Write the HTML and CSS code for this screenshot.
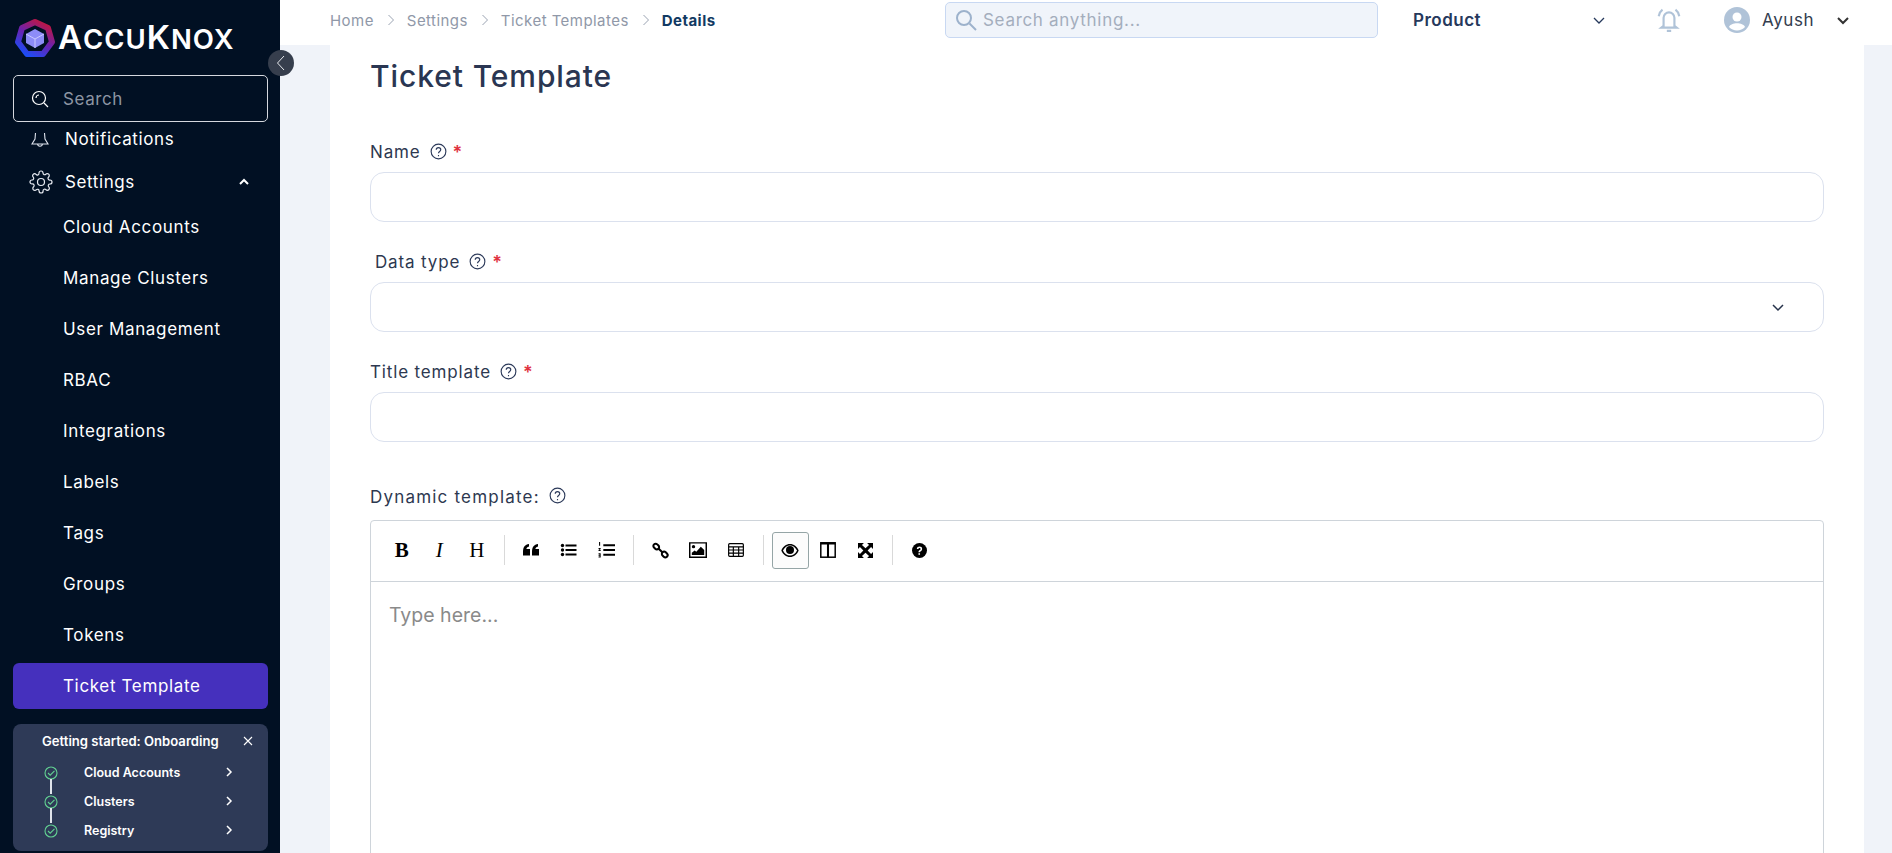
FILE: index.html
```html
<!DOCTYPE html>
<html lang="en">
<head>
<meta charset="utf-8">
<title>Ticket Template</title>
<link rel="stylesheet" href="styles.css">
</head>
<body>
<div class="app">
  <aside class="sidebar">
    <div class="logo">
      <svg class="logo-mark" viewBox="0 0 40 40" width="40" height="40">
        <defs>
          <linearGradient id="lg" x1="0.8" y1="0" x2="0.2" y2="1">
            <stop offset="0" stop-color="#c2163f"/><stop offset=".5" stop-color="#6a22b0"/><stop offset="1" stop-color="#1d4cf5"/>
          </linearGradient>
        </defs>
        <path d="M20 4l13 6 4 14-9 12H12L3 24l4-14z" fill="none" stroke="url(#lg)" stroke-width="6" stroke-linejoin="round"/>
        <path d="M20 11l9 5v9l-9 5-9-5v-9z" fill="#8d8cf7"/>
        <path d="M11 16l9 5 9-5M20 21v9" fill="none" stroke="#c9c8ff" stroke-width="1"/>
      </svg>
      <span class="logo-text"><span class="cap">A</span>CCU<span class="cap">K</span>NOX</span>
    </div>
    <div class="side-search">
      <svg width="20" height="20" viewBox="0 0 20 20" fill="none" stroke="#fff" stroke-width="1.2"><circle cx="9" cy="9" r="6.5"/><path d="M6 9a3 3 0 0 1 3-3M14 14l4 4"/></svg>
      <span>Search</span>
    </div>
    <nav class="nav">
      <div class="nav-top clipped">
        <svg width="20" height="20" viewBox="0 0 20 20" fill="none" stroke="#dfe4ee" stroke-width="1.1"><path d="M5.500 4L5 10l-3 5h16l-3-5-.5-6M7.500 15c.5 3 4.500 3 5 0"/></svg>
        <span>Notifications</span>
      </div>
      <div class="nav-top">
        <svg width="24" height="24" viewBox="0 0 24 24" fill="none" stroke="#e8ebf2" stroke-width="1.2"><circle cx="12" cy="12" r="3.500"/><path d="M19.400 15a1.650 1.650 0 0 0 .33 1.820l.06.06a2 2 0 1 1-2.830 2.830l-.06-.06a1.650 1.650 0 0 0-2.800 1.170V21a2 2 0 1 1-4 0v-.09a1.650 1.650 0 0 0-2.800-1.170l-.06.06a2 2 0 1 1-2.830-2.830l.06-.06A1.650 1.650 0 0 0 3 14H3a2 2 0 1 1 0-4h.09a1.650 1.650 0 0 0 1.170-2.800l-.06-.06a2 2 0 1 1 2.830-2.830l.06.06A1.650 1.650 0 0 0 10 3V3a2 2 0 1 1 4 0v.09a1.650 1.650 0 0 0 2.800 1.170l.06-.06a2 2 0 1 1 2.830 2.830l-.06.06A1.650 1.650 0 0 0 21 10h0a2 2 0 1 1 0 4h-.09a1.650 1.650 0 0 0-1.510 1z"/></svg>
        <span>Settings</span>
        <svg class="nav-caret" width="12" height="8" viewBox="0 0 12 8" fill="none" stroke="#fff" stroke-width="2"><path d="M2 6l4-4 4 4"/></svg>
      </div>
      <a class="nav-item">Cloud Accounts</a>
      <a class="nav-item">Manage Clusters</a>
      <a class="nav-item">User Management</a>
      <a class="nav-item">RBAC</a>
      <a class="nav-item">Integrations</a>
      <a class="nav-item">Labels</a>
      <a class="nav-item">Tags</a>
      <a class="nav-item">Groups</a>
      <a class="nav-item">Tokens</a>
      <a class="nav-item active">Ticket Template</a>
    </nav>
    <section class="onboard">
      <header class="onboard-head">
        <span>Getting started: Onboarding</span>
        <svg width="10" height="10" viewBox="0 0 10 10" stroke="#fff" stroke-width="1.1"><path d="M1 1l8 8M9 1l-8 8"/></svg>
      </header>
      <div class="step">
        <svg class="check" width="14" height="14" viewBox="0 0 14 14" fill="none" stroke="#62d192" stroke-width="1.1"><circle cx="7" cy="7" r="6"/><path d="M4 7l2.200 2.200L10.500 4.800"/></svg>
        <span>Cloud Accounts</span>
        <svg class="step-arrow" width="8" height="12" viewBox="0 0 8 12" fill="none" stroke="#fff" stroke-width="1.500"><path d="M2 2l4 4-4 4"/></svg>
      </div>
      <div class="step link">
        <svg class="check" width="14" height="14" viewBox="0 0 14 14" fill="none" stroke="#62d192" stroke-width="1.1"><circle cx="7" cy="7" r="6"/><path d="M4 7l2.200 2.200L10.500 4.800"/></svg>
        <span>Clusters</span>
        <svg class="step-arrow" width="8" height="12" viewBox="0 0 8 12" fill="none" stroke="#fff" stroke-width="1.500"><path d="M2 2l4 4-4 4"/></svg>
      </div>
      <div class="step link">
        <svg class="check" width="14" height="14" viewBox="0 0 14 14" fill="none" stroke="#62d192" stroke-width="1.1"><circle cx="7" cy="7" r="6"/><path d="M4 7l2.200 2.200L10.500 4.800"/></svg>
        <span>Registry</span>
        <svg class="step-arrow" width="8" height="12" viewBox="0 0 8 12" fill="none" stroke="#fff" stroke-width="1.500"><path d="M2 2l4 4-4 4"/></svg>
      </div>
    </section>
    <button class="collapse" type="button" aria-label="Collapse">
      <svg width="10" height="16" viewBox="0 0 10 16" fill="none" stroke="#e6e8ec" stroke-width="1"><path d="M8 1L1.500 8 8 15"/></svg>
    </button>
  </aside>
  <div class="right">
    <header class="topbar">
      <nav class="crumbs">
        <span>Home</span><svg class="crumb-sep" width="8" height="12" viewBox="0 0 8 12" fill="none" stroke="#9aa3b2" stroke-width="1"><path d="M1.500 1l5 5-5 5"/></svg>
        <span>Settings</span><svg class="crumb-sep" width="8" height="12" viewBox="0 0 8 12" fill="none" stroke="#9aa3b2" stroke-width="1"><path d="M1.500 1l5 5-5 5"/></svg>
        <span>Ticket Templates</span><svg class="crumb-sep" width="8" height="12" viewBox="0 0 8 12" fill="none" stroke="#9aa3b2" stroke-width="1"><path d="M1.500 1l5 5-5 5"/></svg>
        <b>Details</b>
      </nav>
      <div class="top-search">
        <svg width="24" height="24" viewBox="0 0 24 24" fill="none" stroke="#9db2cc" stroke-width="2"><circle cx="10" cy="10" r="7"/><path d="M15.500 15.500L22 22"/></svg>
        <span>Search anything...</span>
      </div>
      <div class="product">
        <b>Product</b>
        <svg width="14" height="9" viewBox="0 0 14 9" fill="none" stroke="#26395c" stroke-width="1.300"><path d="M2 2l5 5 5-5"/></svg>
      </div>
      <svg class="bell" width="26" height="26" viewBox="0 0 24 24" fill="none" stroke="#b0c3d8" stroke-width="2"><path d="M7 17.500V10a5 5 0 0 1 10 0v7.500l2 1.500H5zM10 22h4M2.500 8.500C3 6 4 4 6 2.500M21.500 8.500C21 6 20 4 18 2.500"/></svg>
      <div class="user">
        <svg width="26" height="26" viewBox="0 0 26 26"><circle cx="13" cy="13" r="13" fill="#b0c3d8"/><circle cx="13" cy="10" r="4.500" fill="#fff"/><path d="M5 20c2-5 14-5 16 0-4 4.500-12 4.500-16 0z" fill="#fff"/></svg>
        <span>Ayush</span>
        <svg class="user-caret" width="14" height="9" viewBox="0 0 14 9" fill="none" stroke="#333" stroke-width="2"><path d="M2 2l5 5 5-5"/></svg>
      </div>
    </header>
    <main class="main">
      <div class="card">
        <h1>Ticket Template</h1>
        <div class="field">
          <label class="label"><span>Name</span>
            <svg class="help" width="17" height="17" viewBox="0 0 15 15" fill="none" stroke="#2c3a5a" stroke-width="1"><circle cx="7.500" cy="7.500" r="6.500"/><path d="M5.500 6c0-2.600 4-2.600 4 0 0 1.500-2 1.500-2 3M7.500 10.500v1.200"/></svg>
            <i class="req">*</i></label>
          <div class="input"></div>
        </div>
        <div class="field">
          <label class="label indent"><span>Data type</span>
            <svg class="help" width="17" height="17" viewBox="0 0 15 15" fill="none" stroke="#2c3a5a" stroke-width="1"><circle cx="7.500" cy="7.500" r="6.500"/><path d="M5.500 6c0-2.600 4-2.600 4 0 0 1.500-2 1.500-2 3M7.500 10.500v1.200"/></svg>
            <i class="req">*</i></label>
          <div class="input select">
            <svg width="14" height="9" viewBox="0 0 14 9" fill="none" stroke="#26324a" stroke-width="1.500"><path d="M2 2l5 5 5-5"/></svg>
          </div>
        </div>
        <div class="field">
          <label class="label"><span>Title template</span>
            <svg class="help" width="17" height="17" viewBox="0 0 15 15" fill="none" stroke="#2c3a5a" stroke-width="1"><circle cx="7.500" cy="7.500" r="6.500"/><path d="M5.500 6c0-2.600 4-2.600 4 0 0 1.500-2 1.500-2 3M7.500 10.500v1.200"/></svg>
            <i class="req">*</i></label>
          <div class="input"></div>
        </div>
        <div class="field dynamic">
          <label class="label"><span>Dynamic template:</span>
            <svg class="help" width="17" height="17" viewBox="0 0 15 15" fill="none" stroke="#2c3a5a" stroke-width="1"><circle cx="7.500" cy="7.500" r="6.500"/><path d="M5.500 6c0-2.600 4-2.600 4 0 0 1.500-2 1.500-2 3M7.500 10.500v1.200"/></svg>
          </label>
          <div class="editor">
            <div class="toolbar">
              <button class="tool t-b" type="button">B</button>
              <button class="tool t-i" type="button">I</button>
              <button class="tool t-h" type="button">H</button>
              <i class="sep"></i>
              <button class="tool" type="button"><svg width="16" height="14" viewBox="0 0 16 14"><path d="M0 8.500C0 4 2 1.500 6 1v2.500C4.300 4 3.500 5 3.400 6H7v6.500H0zM9 8.500C9 4 11 1.500 15 1v2.500C13.300 4 12.500 5 12.400 6H16v6.500H9z"/></svg></button>
              <button class="tool" type="button"><svg width="17" height="14" viewBox="0 0 16 14"><circle cx="2" cy="2.500" r="1.700"/><circle cx="2" cy="7" r="1.700"/><circle cx="2" cy="11.500" r="1.700"/><path d="M5 1.500h11v2H5zM5 6h11v2H5zM5 10.500h11v2H5z"/></svg></button>
              <button class="tool" type="button"><svg width="17" height="18" viewBox="0 0 16 16"><path d="M5 2.500h11v2H5zM5 7h11v2H5zM5 11.500h11v2H5zM1 .500h1v3.500H1zM.500 6h2v1l-1 1h1v1h-2V8l1-1h-1zM.500 11h2v4h-2v-1h1v-.5h-1v-1h1V12h-1z"/></svg></button>
              <i class="sep"></i>
              <button class="tool" type="button"><svg width="17" height="17" viewBox="0 0 15 15" fill="none" stroke="#000" stroke-width="1.800"><rect x="1" y="2" width="5.500" height="4" rx="2" transform="rotate(45 3.700 4)"/><rect x="8.500" y="9" width="5.500" height="4" rx="2" transform="rotate(45 11.200 11)"/><path d="M5.500 5.500l4 4"/></svg></button>
              <button class="tool" type="button"><svg width="18" height="16" viewBox="0 0 16 14"><path d="M0 0h16v14H0zm1.300 1.300v11.400h13.400V1.300z"/><circle cx="4" cy="4" r="1.500"/><path d="M2.500 11.500v-2l2.500-2 1.500 1 4-4.500 3 3v4.500z"/></svg></button>
              <button class="tool" type="button"><svg width="16" height="14" viewBox="0 0 15 13" fill="none" stroke="#000" stroke-width="1.100"><rect x=".6" y=".6" width="13.800" height="11.800" rx="1"/><path d="M.6 3.500h13.800M.6 6.500h13.800M.6 9.500h13.800M5 3.500v9M10 3.500v9" /></svg></button>
              <i class="sep"></i>
              <button class="tool on" type="button"><svg width="18" height="13" viewBox="0 0 16 12"><path d="M8 0c3.500 0 6.500 2.300 8 6-1.500 3.700-4.500 6-8 6S1.500 9.700 0 6c1.500-3.700 4.500-6 8-6zm0 1.300C5.300 1.300 3 3 1.500 6 3 9 5.300 10.700 8 10.700S13 9 14.500 6C13 3 10.700 1.300 8 1.300z"/><circle cx="8" cy="5.600" r="3.700"/></svg></button>
              <button class="tool" type="button"><svg width="16" height="16" viewBox="0 0 14 14" fill="none" stroke="#000" stroke-width="1.300"><rect x=".7" y=".7" width="12.600" height="12.600"/><path d="M7 .7v12.600M.7 1.300h12.600" stroke-width="1.800"/></svg></button>
              <button class="tool" type="button"><svg width="15" height="15" viewBox="0 0 14 14"><path d="M0 0h5.500L3.700 1.800 7 5 10.300 1.800 8.500 0H14v5.500l-1.800-1.800L9 7l3.200 3.300L14 8.500V14H8.500l1.800-1.800L7 9l-3.300 3.200L5.500 14H0V8.500l1.800 1.800L5 7 1.800 3.700 0 5.500z"/></svg></button>
              <i class="sep"></i>
              <button class="tool" type="button"><svg width="15" height="15" viewBox="0 0 14 14"><circle cx="7" cy="7" r="7"/><path d="M4.500 5.500C4.600 2.500 9.500 2.500 9.500 5.500c0 2-2 1.800-2 3.200H6c0-2.300 2-2 2-3.200 0-1.100-1.900-1-2 .2zM6 9.500h1.500V11H6z" fill="#fff"/></svg></button>
            </div>
            <div class="editor-body">Type here...</div>
          </div>
        </div>
      </div>
    </main>
  </div>
</div>
</body>
</html>
```
FILE: styles.css
```css
* { box-sizing: border-box; }
html, body { margin: 0; height: 100%; overflow: hidden; }
body { font-family: Inter, "Open Sans", sans-serif; color: #2a3652; background: #f0f3f9; }
.app { display: flex; height: 853px; overflow: hidden; }

.sidebar { position: relative; width: 280px; flex: none; background: #011023; padding: 0 12px 0 13px; display: flex; flex-direction: column; color: #fff; }
.logo { height: 75px; flex: none; display: flex; align-items: center; gap: 3px; padding: 0 0 0 2px; }
.logo-mark { flex: none; margin-top: 1px; }
.logo-text { font-family: Inter, sans-serif; font-size: 27.500px; font-weight: 600; letter-spacing: 1px; color: #fff; line-height: 1; }
.cap { font-size: 33px; }
.side-search { height: 47px; flex: none; border: 1px solid #d5d8de; border-radius: 5px; display: flex; align-items: center; gap: 13px; padding: 0 16px; color: #8d95a3; font-size: 17px; letter-spacing: .6px; position: relative; z-index: 1; background: #011023; }
.nav { height: 602px; flex: none; }
.nav-top { height: 44px; display: flex; align-items: center; gap: 12px; padding-left: 16px; font-size: 17px; letter-spacing: .6px; }
.nav-top.clipped { height: 38px; padding: 0 0 5px 17px; gap: 15px; }
.nav-caret { margin-left: auto; margin-right: 18px; }
.nav-item { display: flex; align-items: center; height: 46px; margin-bottom: 5px; padding-left: 50px; font-size: 17px; letter-spacing: .65px; border-radius: 6px; color: #fff; }
.nav-item.active { background: #4530bd; }
.onboard { height: 127px; flex: none; background: #2e3a57; border-radius: 8px; padding: 8px 0 0; position: relative; }
.onboard-head { display: flex; align-items: center; justify-content: space-between; padding: 0 15px 0 29px; font-size: 13.100px; font-weight: 600; line-height: 18px; }
.step { position: relative; display: flex; align-items: center; height: 29px; font-size: 12.500px; font-weight: 600; padding-left: 31px; }
.onboard-head + .step { margin-top: 8px; }
.check { flex: none; margin-right: 26px; }
.step-arrow { position: absolute; left: 212px; top: 8px; }
.step.link::before { content: ""; position: absolute; left: 37px; top: -8px; width: 1.500px; height: 15px; background: #dfe3ea; }
.collapse { position: absolute; left: 268px; top: 50px; width: 26px; height: 26px; padding: 0; border: 0; border-radius: 50%; background: #363e4d; display: flex; align-items: center; justify-content: center; z-index: 5; }

.right { flex: 1; min-width: 0; display: flex; flex-direction: column; }
.topbar { height: 45px; flex: none; background: #fff; display: flex; align-items: center; padding: 0 0 5px 50px; }
.crumbs { width: 615px; flex: none; display: flex; align-items: center; font-size: 15px; color: #9098a8; letter-spacing: .45px; }
.crumbs b { color: #123a63; font-weight: 700; }
.crumb-sep { margin: 0 12px 0 13px; }
.top-search { width: 433px; height: 36px; flex: none; background: #f0f4fa; border: 1px solid #c8d8f2; border-radius: 5px; display: flex; align-items: center; gap: 5px; padding-left: 8px; color: #a4aebd; font-size: 17px; letter-spacing: .7px; }
.product { width: 201px; flex: none; margin-left: 35px; display: flex; align-items: center; justify-content: space-between; font-size: 17px; color: #26395c; padding-right: 8px; }
.product b { font-weight: 600; letter-spacing: .5px; }
.bell { flex: none; margin-left: 42px; }
.user { display: flex; align-items: center; margin-left: 42px; font-size: 17px; color: #333d4f; letter-spacing: .6px; }
.user span { margin-left: 12px; }
.user-caret { margin-left: 22px; }

.main { flex: 1; min-height: 0; padding: 0 28px 0 50px; }
.card { background: #fff; height: 100%; padding: 0 40px; overflow: hidden; }
h1 { margin: 0; padding-top: 14px; height: 93px; font-size: 30px; line-height: 34px; font-weight: 500; color: #2a3652; letter-spacing: .9px; }
.field { height: 110px; }
.label { display: flex; align-items: center; gap: 9px; height: 34px; padding-bottom: 6px; font-size: 17px; letter-spacing: .85px; color: #2d3850; }
.label.indent { padding-left: 5px; }
.help { flex: none; margin-top: -2px; }
.req { font-style: normal; color: #e0323f; margin-left: -3px; font-size: 18px; font-weight: 600; margin-top: 1px; }
.input { height: 50px; border: 1px solid #dbe1ee; border-radius: 14px; background: #fff; }
.input.select { display: flex; align-items: center; justify-content: flex-end; padding-right: 38px; }
.dynamic { height: auto; margin-top: 18px; }
.dynamic .label { padding-bottom: 13px; letter-spacing: 1.2px; }
.editor { border: 1px solid #ced4da; border-radius: 4px; height: 400px; }
.toolbar { height: 61px; border-bottom: 1px solid #ced4da; display: flex; align-items: center; padding: 0 0 2px 12px; }
.tool { width: 37.500px; height: 37px; padding: 0; border: 1px solid transparent; border-radius: 3px; background: none; display: flex; align-items: center; justify-content: center; color: #000; font-family: "Liberation Serif", serif; font-size: 21px; line-height: 1; flex: none; }
.t-b { font-weight: 700; }
.t-i { font-style: italic; }
.tool.on { background: #fcfcfc; border-color: #95a5a6; }
.sep { width: 1px; height: 30px; background: #d9d9d9; margin: 0 8px; flex: none; }
.editor-body { padding: 20px 18px; font-size: 19.500px; color: #8a8a8a; line-height: 26px; }
```
